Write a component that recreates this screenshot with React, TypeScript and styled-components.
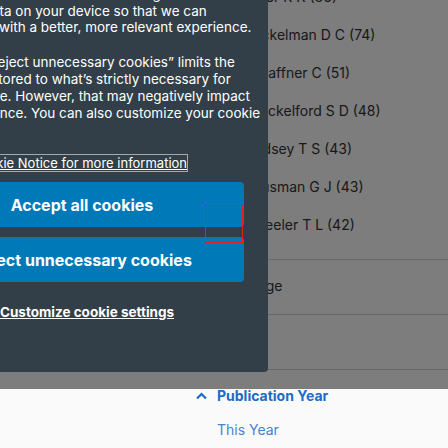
import styled, { createGlobalStyle } from "styled-components";

const GlobalStyle = createGlobalStyle`
  html, body {
    margin: 0;
    padding: 0;
    background: #fafafa;
    overflow: hidden;
  }
  body {
    font-family: Inter, "Noto Sans", Arial, sans-serif;
  }
`;

const Page = styled.div`
  position: relative;
  width: 448px;
  height: 448px;
  overflow: hidden;
  background: #fafafa;
`;

const Sidebar = styled.aside`
  display: flex;
  flex-direction: column;
  padding-left: 196px;
  margin-top: -23px;
  color: #333;
  font-size: 14px;
`;

const AuthorList = styled.ul`
  list-style: none;
  margin: 0;
  padding: 0 0 16px;
`;

const AuthorItem = styled.li`
  height: 38px;
  display: flex;
  align-items: center;
  padding-left: 47px;
  white-space: nowrap;
`;

const FacetGroup = styled.section`
  border-top: 1px solid #cfcfcf;
  padding: 17px 0 20px;
`;

const FacetHeader = styled.div<{ $open?: boolean }>`
  display: flex;
  align-items: center;
  gap: 10px;
  height: 17px;
  color: ${(p) => (p.$open ? "#1b6cc6" : "#333")};
  font-weight: ${(p) => (p.$open ? 700 : 400)};
  white-space: nowrap;
`;

const Chevron = styled.svg`
  width: 11px;
  height: 8px;
  flex-shrink: 0;
`;

const FacetOption = styled.div`
  margin-top: 17px;
  padding-left: 21px;
  color: #4a82d2;
`;

const Overlay = styled.div`
  position: absolute;
  top: 0;
  left: 0;
  right: 0;
  height: 389px;
  background: rgba(0, 0, 0, 0.5);
  display: flex;
  flex-direction: column;
  justify-content: flex-end;
  align-items: flex-start;
  padding-bottom: 17px;
  box-sizing: border-box;
  overflow: hidden;
`;

const Dialog = styled.div`
  flex-shrink: 0;
  width: 372px;
  margin-left: -104px;
  box-sizing: border-box;
  padding: 24px 24px 51px;
  background: #333f48;
  border-radius: 4px;
  color: #fff;
`;

const Title = styled.h2`
  margin: 0 0 12px;
  font-size: 18px;
  font-weight: 700;
`;

const Text = styled.p<{ $gap?: number; $size?: number }>`
  margin: 0 0 ${(p) => p.$gap ?? 17}px;
  font-size: ${(p) => p.$size ?? 13.5}px;
  line-height: 16.8px;
  white-space: nowrap;
`;

const NoticeLink = styled.a`
  color: #fff;
  text-decoration: underline;
  outline: 1px solid #a8a8a8;
`;

const Buttons = styled.div`
  display: flex;
  flex-direction: column;
  gap: 10px;
  margin-top: 10px;
`;

const Button = styled.button`
  height: 45px;
  width: 100%;
  border: none;
  border-radius: 4px;
  background: #0079b8;
  color: #fff;
  font-family: Inter, "Noto Sans", Arial, sans-serif;
  font-size: 16px;
  font-weight: 700;
  cursor: pointer;
`;

const Customize = styled.a`
  display: block;
  margin-top: 22px;
  padding-left: 10px;
  text-align: center;
  font-size: 13.5px;
  font-weight: 700;
  line-height: 17px;
  color: #fff;
  text-decoration: underline;
`;

const FocusMarker = styled.div`
  position: absolute;
  left: 205px;
  top: 205px;
  width: 38px;
  height: 38px;
  box-sizing: border-box;
  border: 1px solid #e3211c;
  pointer-events: none;
`;

const authors = [
  "Miller R K (86)",
  "Heckelman D C (74)",
  "Schaffner C (51)",
  "Shackelford S D (48)",
  "Lindsey T S (43)",
  "Hausman G J (43)",
  "Wheeler T L (42)",
];

const App = () => {
  return (
    <>
      <GlobalStyle />
      <Page>
        <Sidebar>
          <AuthorList>
            {authors.map((a) => (
              <AuthorItem key={a}>{a}</AuthorItem>
            ))}
          </AuthorList>
          <FacetGroup>
            <FacetHeader>
              <Chevron viewBox="0 0 11 8">
                <polyline points="1,1.5 5.5,6 10,1.5" fill="none" stroke="#333" strokeWidth="2" />
              </Chevron>
              Language
            </FacetHeader>
          </FacetGroup>
          <FacetGroup>
            <FacetHeader>
              <Chevron viewBox="0 0 11 8">
                <polyline points="1,1.5 5.5,6 10,1.5" fill="none" stroke="#333" strokeWidth="2" />
              </Chevron>
              Format
            </FacetHeader>
          </FacetGroup>
          <FacetGroup>
            <FacetHeader $open>
              <Chevron viewBox="0 0 11 8">
                <polyline points="1,6.5 5.5,2 10,6.5" fill="none" stroke="#1b6cc6" strokeWidth="2.2" />
              </Chevron>
              Publication Year
            </FacetHeader>
            <FacetOption>This Year</FacetOption>
          </FacetGroup>
        </Sidebar>

        <Overlay>
          <Dialog role="dialog">
            <Title>We value your privacy</Title>
            <Text $gap={18}>
              We use cookies and similar technologies to read
              <br />
              and store data on your device so that we can
              <br />
              provide you with a better, more relevant experience.
            </Text>
            <Text>
              Selecting “Reject unnecessary cookies” limits the
              <br />
              data being stored to what’s strictly necessary for
              <br />
              using this site. However, that may negatively impact
              <br />
              your experience. You can also customize your cookie
              <br />
              settings.
            </Text>
            <Text $gap={0} $size={13}>
              <NoticeLink href="#">See our Cookie Notice for more information</NoticeLink>
            </Text>
            <Buttons>
              <Button>Accept all cookies</Button>
              <Button>Reject unnecessary cookies</Button>
            </Buttons>
            <Customize href="#">Customize cookie settings</Customize>
          </Dialog>
          <FocusMarker />
        </Overlay>
      </Page>
    </>
  );
};

export default App;
